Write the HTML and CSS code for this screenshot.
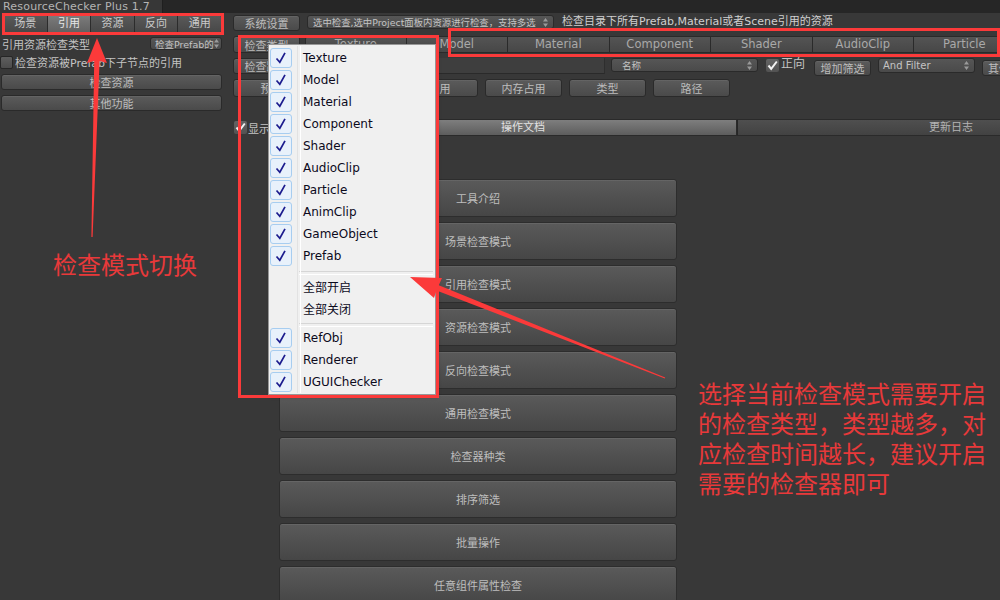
FILE: index.html
```html
<!DOCTYPE html>
<html>
<head>
<meta charset="utf-8">
<title>ResourceChecker Plus</title>
<link rel="stylesheet" href="styles.css">
</head>
<body>
<div class="titlebar"><div class="wintab">ResourceChecker Plus 1.7</div></div>
<div class="window">
  <aside class="side">
    <div class="modebar">
      <div class="mode">场景</div><div class="mode on">引用</div><div class="mode">资源</div><div class="mode">反向</div><div class="mode">通用</div>
    </div>
    <div class="srow"><span class="lbl">引用资源检查类型</span><div class="popup sp">检查Prefab的<svg class="arr" width="5" height="9" viewBox="0 0 5 9"><path d="M0 3.5L2.5 0L5 3.5ZM0 5.5L2.5 9L5 5.5Z" fill="#9a9a9a"/></svg></div></div>
    <div class="srow chkrow"><span class="chk"></span><span class="lbl">检查资源被Prefab下子节点的引用</span></div>
    <div class="btn wide b1">检查资源</div>
    <div class="btn wide b2">其他功能</div>
  </aside>
  <main class="main">
    <div class="r1">
      <div class="btn w67">系统设置</div>
      <div class="popup p1">选中检查,选中Project面板内资源进行检查，支持多选<svg class="arr" width="5" height="9" viewBox="0 0 5 9"><path d="M0 3.5L2.5 0L5 3.5ZM0 5.5L2.5 9L5 5.5Z" fill="#9a9a9a"/></svg></div>
      <span class="lbl l1">检查目录下所有Prefab,Material或者Scene引用的资源</span>
    </div>
    <div class="r2">
      <div class="btn w67">检查类型</div>
      <div class="mask">
        <div>Texture</div><div>Model</div><div>Material</div><div>Component</div><div>Shader</div><div>AudioClip</div><div>Particle</div>
      </div>
    </div>
    <div class="r3">
      <div class="btn w67">检查路径</div>
      <div class="field"></div>
      <div class="popup p2">名称<svg class="arr" width="5" height="9" viewBox="0 0 5 9"><path d="M0 3.5L2.5 0L5 3.5ZM0 5.5L2.5 9L5 5.5Z" fill="#9a9a9a"/></svg></div>
      <span class="chk on"><svg width="13" height="13" viewBox="0 0 13 13"><path d="M2.5 6.5L5.2 9.8L10.8 2.5" fill="none" stroke="#f2f2f2" stroke-width="2"/></svg></span>
      <span class="lbl dir">正向</span>
      <div class="btn add">增加筛选</div>
      <div class="popup p3">And Filter<svg class="arr" width="5" height="9" viewBox="0 0 5 9"><path d="M0 3.5L2.5 0L5 3.5ZM0 5.5L2.5 9L5 5.5Z" fill="#9a9a9a"/></svg></div>
      <div class="btn other">其他功能</div>
    </div>
    <div class="r4">
      <div class="btn w77">预览</div>
      <div class="btn w77">名称</div>
      <div class="btn w77">引用</div>
      <div class="btn w77">内存占用</div>
      <div class="btn w77">类型</div>
      <div class="btn w77">路径</div>
    </div>
    <div class="r5">
      <div class="show"><span class="chk on"><svg width="13" height="13" viewBox="0 0 13 13"><path d="M2.5 6.5L5.2 9.8L10.8 2.5" fill="none" stroke="#f2f2f2" stroke-width="2"/></svg></span><span class="lbl">显示</span></div>
      <div class="tabs"><div class="tab on">操作文档</div><div class="tab">更新日志</div></div>
    </div>
    <div class="doc">
      <div class="dbtn">工具介绍</div>
      <div class="dbtn">场景检查模式</div>
      <div class="dbtn">引用检查模式</div>
      <div class="dbtn">资源检查模式</div>
      <div class="dbtn">反向检查模式</div>
      <div class="dbtn">通用检查模式</div>
      <div class="dbtn">检查器种类</div>
      <div class="dbtn">排序筛选</div>
      <div class="dbtn">批量操作</div>
      <div class="dbtn">任意组件属性检查</div>
    </div>
  </main>
</div>

<div class="menu">
  <div class="mi"><span class="ck"><svg width="20" height="18" viewBox="0 0 20 18"><path d="M5.5 9.5L8.8 13.2L14 3.8" fill="none" stroke="#1c1c8e" stroke-width="1.7"/></svg></span><span class="mt">Texture</span></div>
  <div class="mi"><span class="ck"><svg width="20" height="18" viewBox="0 0 20 18"><path d="M5.5 9.5L8.8 13.2L14 3.8" fill="none" stroke="#1c1c8e" stroke-width="1.7"/></svg></span><span class="mt">Model</span></div>
  <div class="mi"><span class="ck"><svg width="20" height="18" viewBox="0 0 20 18"><path d="M5.5 9.5L8.8 13.2L14 3.8" fill="none" stroke="#1c1c8e" stroke-width="1.7"/></svg></span><span class="mt">Material</span></div>
  <div class="mi"><span class="ck"><svg width="20" height="18" viewBox="0 0 20 18"><path d="M5.5 9.5L8.8 13.2L14 3.8" fill="none" stroke="#1c1c8e" stroke-width="1.7"/></svg></span><span class="mt">Component</span></div>
  <div class="mi"><span class="ck"><svg width="20" height="18" viewBox="0 0 20 18"><path d="M5.5 9.5L8.8 13.2L14 3.8" fill="none" stroke="#1c1c8e" stroke-width="1.7"/></svg></span><span class="mt">Shader</span></div>
  <div class="mi"><span class="ck"><svg width="20" height="18" viewBox="0 0 20 18"><path d="M5.5 9.5L8.8 13.2L14 3.8" fill="none" stroke="#1c1c8e" stroke-width="1.7"/></svg></span><span class="mt">AudioClip</span></div>
  <div class="mi"><span class="ck"><svg width="20" height="18" viewBox="0 0 20 18"><path d="M5.5 9.5L8.8 13.2L14 3.8" fill="none" stroke="#1c1c8e" stroke-width="1.7"/></svg></span><span class="mt">Particle</span></div>
  <div class="mi"><span class="ck"><svg width="20" height="18" viewBox="0 0 20 18"><path d="M5.5 9.5L8.8 13.2L14 3.8" fill="none" stroke="#1c1c8e" stroke-width="1.7"/></svg></span><span class="mt">AnimClip</span></div>
  <div class="mi"><span class="ck"><svg width="20" height="18" viewBox="0 0 20 18"><path d="M5.5 9.5L8.8 13.2L14 3.8" fill="none" stroke="#1c1c8e" stroke-width="1.7"/></svg></span><span class="mt">GameObject</span></div>
  <div class="mi"><span class="ck"><svg width="20" height="18" viewBox="0 0 20 18"><path d="M5.5 9.5L8.8 13.2L14 3.8" fill="none" stroke="#1c1c8e" stroke-width="1.7"/></svg></span><span class="mt">Prefab</span></div>
  <div class="sep"></div>
  <div class="mi"><span class="ck none"></span><span class="mt">全部开启</span></div>
  <div class="mi"><span class="ck none"></span><span class="mt">全部关闭</span></div>
  <div class="sep"></div>
  <div class="mi"><span class="ck"><svg width="20" height="18" viewBox="0 0 20 18"><path d="M5.5 9.5L8.8 13.2L14 3.8" fill="none" stroke="#1c1c8e" stroke-width="1.7"/></svg></span><span class="mt">RefObj</span></div>
  <div class="mi"><span class="ck"><svg width="20" height="18" viewBox="0 0 20 18"><path d="M5.5 9.5L8.8 13.2L14 3.8" fill="none" stroke="#1c1c8e" stroke-width="1.7"/></svg></span><span class="mt">Renderer</span></div>
  <div class="mi"><span class="ck"><svg width="20" height="18" viewBox="0 0 20 18"><path d="M5.5 9.5L8.8 13.2L14 3.8" fill="none" stroke="#1c1c8e" stroke-width="1.7"/></svg></span><span class="mt">UGUIChecker</span></div>
</div>

<svg class="overlay" width="1000" height="600" viewBox="0 0 1000 600">
  <rect x="3.5" y="14.5" width="219" height="19" fill="none" stroke="#fb3a3a" stroke-width="3"/>
  <rect x="239.5" y="36.5" width="198" height="360" fill="none" stroke="#fb3a3a" stroke-width="3"/>
  <rect x="449.5" y="29.5" width="549" height="26" fill="none" stroke="#fb3a3a" stroke-width="3"/>
  <path d="M97 38L107 63L99.6 61L92.6 237L91.4 237L94.2 61L87 63Z" fill="#fb3a3a"/>
  <path d="M410 277L442 278L438.8 285.2L665.2 377.5L664.8 378.5L436.5 290.5L434 298Z" fill="#fb3a3a"/>
</svg>

<div class="note n1">检查模式切换</div>
<div class="note n2">选择当前检查模式需要开启<br>的检查类型，类型越多，对<br>应检查时间越长，建议开启<br>需要的检查器即可</div>
</body>
</html>
```

FILE: styles.css
```css
* { box-sizing: border-box; margin: 0; padding: 0; }
html, body { width: 1000px; height: 600px; overflow: hidden; }
body {
  position: relative;
  background: #383838;
  font-family: "DejaVu Sans", "Noto Sans CJK SC", sans-serif;
  font-size: 11px;
  color: #c2c2c2;
}

/* title strip */
.titlebar { height: 13px; background: #262626; display: flex; }
.wintab {
  width: 163px; background: #373737; color: #b4b4b4;
  font-size: 11px; line-height: 13px; padding-left: 3px;
  border-right: 1px solid #1f1f1f; letter-spacing: 0.2px;
}

.window { display: flex; height: 587px; }

/* generic controls */
.btn {
  display: flex; align-items: center; justify-content: center;
  background: linear-gradient(#5b5b5b, #4a4a4a);
  border: 1px solid #2a2a2a; border-radius: 3px;
  color: #bdbdbd; font-size: 11px; white-space: nowrap; overflow: hidden;
  box-shadow: inset 0 1px 0 rgba(255,255,255,0.06);
}
.popup {
  position: relative; display: flex; align-items: center;
  background: linear-gradient(#565656, #4a4a4a);
  border: 1px solid #2a2a2a; border-radius: 3px;
  color: #c4c4c4; font-size: 10px; padding-left: 5px; white-space: nowrap; overflow: hidden;
}
.popup .arr { position: absolute; right: 5px; top: 2px; }
.lbl { white-space: nowrap; color: #c4c4c4; }
.chk {
  display: inline-block; width: 13px; height: 13px; flex-shrink: 0;
  background: linear-gradient(#5e5e5e, #4c4c4c);
  border: 1px solid #262626; border-radius: 2px;
}
.chk.on { border: 0; background: linear-gradient(#646464, #525252); }
.chk svg { display: block; }

/* left side */
.side { width: 224px; padding-top: 2px; display: flex; flex-direction: column; flex-shrink: 0; }
.modebar {
  display: flex; margin-left: 3px; width: 219px; height: 18px;
  border: 1px solid #242424; border-radius: 2px; overflow: hidden;
}
.mode {
  flex: 1; text-align: center; line-height: 16px; font-size: 11px;
  background: linear-gradient(#595959, #484848);
  border-right: 1px solid #2c2c2c; color: #cacaca;
}
.mode:last-child { border-right: 0; }
.mode.on { background: linear-gradient(#7b7b7b, #626262); color: #e6e6e6; }
.srow { display: flex; align-items: center; justify-content: space-between; margin-top: 4px; height: 13px; padding-left: 2px; padding-right: 2px; }
.popup.sp { width: 72px; height: 13px; font-size: 9.5px; padding-left: 4px; }
.popup.sp .arr { top: 1px; right: 2px; }
.chkrow { justify-content: flex-start; gap: 2px; margin-top: 5px; height: 14px; padding-left: 0; }
.btn.wide { margin-left: 1px; width: 221px; height: 16px; }
.b1 { margin-top: 5px; }
.b2 { margin-top: 5px; }

/* main */
.main { flex: 1; min-width: 0; padding-left: 9px; padding-top: 2px; overflow: hidden; display: flex; flex-direction: column; }
.r1, .r2, .r3, .r4, .r5 { display: flex; flex-shrink: 0; }
.r1 > *, .r2 > *, .r3 > *, .r4 > *, .r5 > * { flex-shrink: 0; }
.r1 { height: 16px; align-items: flex-start; }
.w67 { width: 67px; height: 16px; }
.popup.p1 { margin-left: 7px; width: 247px; height: 14px; font-size: 9.4px; }
.popup.p1 .arr { top: 2px; }
.l1 { margin-left: 8px; line-height: 14px; color: #cfcfcf; }

.r2 { margin-top: 5px; height: 17px; }
.r2 .w67 { height: 17px; }
.mask { display: flex; margin-left: 5px; }
.mask div {
  flex-shrink: 0; width: 101.5px; height: 17px; line-height: 15px; text-align: center;
  background: linear-gradient(#545454, #474747);
  border: 1px solid #2a2a2a; border-left-width: 0;
  color: #a9a9a9; font-size: 11.5px;
}
.mask div:first-child { border-left-width: 1px; border-radius: 3px 0 0 3px; }

.r3 { margin-top: 5px; height: 17px; align-items: flex-start; }
.field { margin-left: 5px; width: 300px; height: 16px; background: #3e3e3e; border-bottom: 1px solid #2a2a2a; border-right: 1px solid #2e2e2e; }
.popup.p2 { margin-left: 6px; width: 147px; height: 14px; padding-left: 10px; font-size: 9.5px; }
.popup.p2 .arr { top: 2px; }
.r3 .chk.on { margin-left: 8px; margin-top: 1px; }
.lbl.dir { margin-left: 2px; font-size: 12px; line-height: 13px; }
.btn.add { margin-left: 9px; margin-top: 2px; width: 57px; height: 16px; }
.popup.p3 { margin-left: 7px; width: 97px; height: 15px; font-size: 10px; padding-left: 4px; }
.popup.p3 .arr { top: 2px; }
.btn.other { margin-left: 7px; margin-top: 2px; width: 60px; height: 16px; justify-content: flex-start; padding-left: 5px; }

.r4 { margin-top: 4px; height: 18px; gap: 7px; }
.w77 { width: 77px; height: 18px; }

.r5 { margin-top: 22px; height: 17px; }
.show { width: 76px; display: flex; align-items: center; gap: 1px; padding-left: 1px; }
.show .lbl { font-size: 11px; }
.tabs { display: flex; }
.tab {
  flex-shrink: 0; width: 428px; height: 17px; line-height: 16px; text-align: center;
  background: linear-gradient(#4f4f4f, #424242);
  border: 1px solid #2a2a2a; color: #b4b4b4; font-size: 11px;
}
.tab + .tab { border-left: 1px solid #262626; }
.tab.on { background: linear-gradient(#7e7e7e, #5d5d5d); color: #e2e2e2; }

.doc { margin-top: 43px; margin-left: 46px; width: 398px; display: flex; flex-direction: column; gap: 5px; }
.dbtn {
  flex-shrink: 0; height: 38px; display: flex; align-items: center; justify-content: center;
  background: linear-gradient(#5a5a5a, #464646);
  border: 1px solid #2d2d2d; border-radius: 3px;
  box-shadow: inset 0 1px 0 rgba(255,255,255,0.07);
  color: #bebebe; font-size: 11px;
}

/* dropdown menu */
.menu {
  position: absolute; left: 268px; top: 44px; width: 168px; height: 351px;
  background: #f0f0f0; border: 1px solid #979797;
  box-shadow: 2px 2px 3px rgba(0,0,0,0.35);
  padding-top: 2px;
  font-family: "DejaVu Sans", "Noto Sans CJK SC", sans-serif;
}
.menu::before {
  content: ""; position: absolute; left: 28px; top: 1px; bottom: 1px; width: 2px;
  border-left: 1px solid #e2e2e2; border-right: 1px solid #ffffff;
}
.mi { display: flex; align-items: center; height: 22px; }
.ck {
  width: 22px; height: 20px; margin-left: 1px; flex-shrink: 0;
  border: 1px solid #a7cdf0; border-radius: 3px; background: #e8f1fb;
}
.ck svg { display: block; }
.ck.none { border-color: transparent; background: transparent; }
.mt { margin-left: 11px; font-size: 12px; color: #0c0a1c; white-space: nowrap; }
.sep { height: 8px; margin-left: 30px; margin-right: 2px; padding-top: 4px; }
.sep::after { content: ""; display: block; height: 2px; border-top: 1px solid #d6d6d6; border-bottom: 1px solid #ffffff; }

/* annotation layer */
.overlay { position: absolute; left: 0; top: 0; pointer-events: none; }
.note {
  position: absolute; color: #e8393a; font-family: "Noto Sans CJK SC", sans-serif;
  font-size: 24px; line-height: 30px; white-space: nowrap;
}
.n1 { left: 53px; top: 249px; }
.n2 { left: 698px; top: 378px; }
```
